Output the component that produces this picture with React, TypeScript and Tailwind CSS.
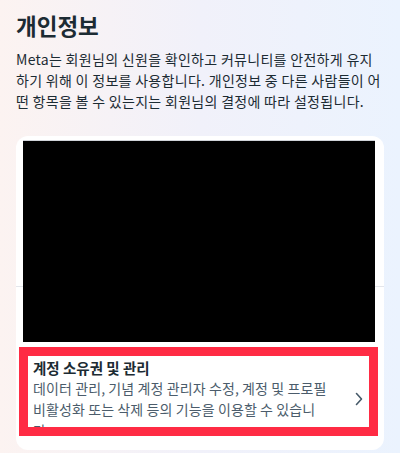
export default function App() {
  return (
    <div
      className="h-[453px] w-[400px] overflow-hidden bg-gradient-to-r from-[#fcf3f1] via-[#f1f1fa] to-[#ebf3fe] px-4 pt-[9px] text-[#1c2b33]"
      style={{ fontFamily: '"Noto Sans CJK KR", "Noto Sans", sans-serif' }}
    >
      <h1 className="text-[22.5px] font-bold leading-[32px]">개인정보</h1>
      <p className="mt-2 text-[14px] leading-[21px] tracking-[0.3px] text-[#1c2b33]">
        Meta는 회원님의 신원을 확인하고 커뮤니티를 안전하게 유지하기 위해 이 정보를 사용합니다. 개인정보 중 다른 사람들이 어떤 항목을 볼 수 있는지는 회원님의 결정에 따라 설정됩니다.
      </p>

      <div className="relative mt-6 h-[314px] overflow-hidden rounded-xl bg-white">
        <div className="h-[151px] border-b border-[#e4e6eb]" />
        <div className="h-[60px]" />

        <div className="ml-[3px] mr-[6px] h-[89px] overflow-hidden border-[9px] border-[#ff2b44]">
          <div className="flex items-center pl-[5px] pt-px">
            <div className="w-[302px] shrink-0">
              <div className="text-[14.5px] font-bold leading-[21px] text-[#1c2b33]">
                계정 소유권 및 관리
              </div>
              <div className="text-[14px] leading-[21px] tracking-[0.1px] text-[#4b5c6b]">
                데이터 관리, 기념 계정 관리자 수정, 계정 및 프로필 비활성화 또는 삭제 등의 기능을 이용할 수 있습니
                <br />
                다.
              </div>
            </div>
            <svg
              width="8"
              height="14"
              viewBox="0 0 8 14"
              fill="none"
              className="ml-[20px] text-[#465a69]"
            >
              <path d="M1.5 1.5 L6.5 7 L1.5 12.5" stroke="currentColor" strokeWidth="1.6" strokeLinecap="round" strokeLinejoin="round" />
            </svg>
          </div>
        </div>

        <div className="absolute left-[7px] right-[9px] top-[4px] h-[202px] border-t border-[#d0d3d8] bg-black" />
      </div>
    </div>
  );
}
